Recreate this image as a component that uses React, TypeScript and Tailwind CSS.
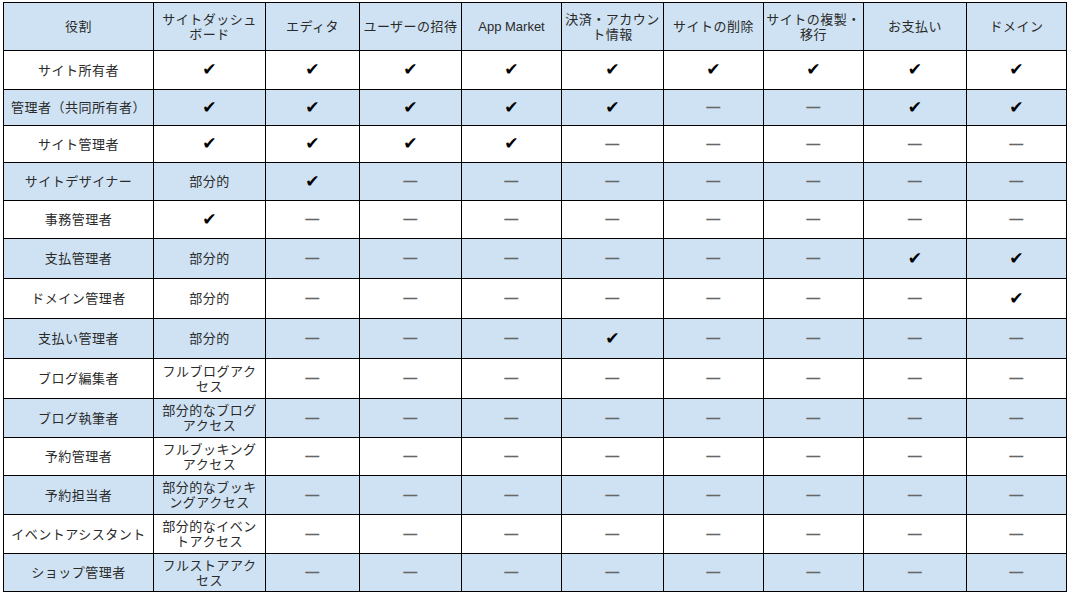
const headers: string[][] = [
  ['役割'],
  ['サイトダッシュ', 'ボード'],
  ['エディタ'],
  ['ユーザーの招待'],
  ['App Market'],
  ['決済・アカウン', 'ト情報'],
  ['サイトの削除'],
  ['サイトの複製・', '移行'],
  ['お支払い'],
  ['ドメイン'],
];

const widths = [
  'w-[150px]',
  'w-[112px]',
  'w-[94px]',
  'w-[102px]',
  'w-[100px]',
  'w-[102px]',
  'w-[100px]',
  'w-[100px]',
  'w-[103px]',
  'w-[100px]',
];

const Y = '✔';
const N = '—';

interface Row {
  role: string;
  dash: string[];
  cells: string[];
  h: string;
}

const rows: Row[] = [
  { role: 'サイト所有者', dash: [Y], cells: [Y, Y, Y, Y, Y, Y, Y, Y], h: 'h-[39px]' },
  { role: '管理者（共同所有者）', dash: [Y], cells: [Y, Y, Y, Y, N, N, Y, Y], h: 'h-[36px]' },
  { role: 'サイト管理者', dash: [Y], cells: [Y, Y, Y, N, N, N, N, N], h: 'h-[37px]' },
  { role: 'サイトデザイナー', dash: ['部分的'], cells: [Y, N, N, N, N, N, N, N], h: 'h-[38px]' },
  { role: '事務管理者', dash: [Y], cells: [N, N, N, N, N, N, N, N], h: 'h-[38px]' },
  { role: '支払管理者', dash: ['部分的'], cells: [N, N, N, N, N, N, Y, Y], h: 'h-[40px]' },
  { role: 'ドメイン管理者', dash: ['部分的'], cells: [N, N, N, N, N, N, N, Y], h: 'h-[40px]' },
  { role: '支払い管理者', dash: ['部分的'], cells: [N, N, N, Y, N, N, N, N], h: 'h-[40px]' },
  { role: 'ブログ編集者', dash: ['フルブログアク', 'セス'], cells: [N, N, N, N, N, N, N, N], h: 'h-[40px]' },
  { role: 'ブログ執筆者', dash: ['部分的なブログ', 'アクセス'], cells: [N, N, N, N, N, N, N, N], h: 'h-[39px]' },
  { role: '予約管理者', dash: ['フルブッキング', 'アクセス'], cells: [N, N, N, N, N, N, N, N], h: 'h-[38px]' },
  { role: '予約担当者', dash: ['部分的なブッキ', 'ングアクセス'], cells: [N, N, N, N, N, N, N, N], h: 'h-[39px]' },
  { role: 'イベントアシスタント', dash: ['部分的なイベン', 'トアクセス'], cells: [N, N, N, N, N, N, N, N], h: 'h-[39px]' },
  { role: 'ショップ管理者', dash: ['フルストアアク', 'セス'], cells: [N, N, N, N, N, N, N, N], h: 'h-[38px]' },
];

function Mark({ value }: { value: string }) {
  if (value === Y) {
    return <span className="text-[17px] leading-[15px] text-black font-['DejaVu_Sans',sans-serif]">{Y}</span>;
  }
  if (value === N) {
    return <span className="text-[14px] font-bold text-[#666] font-['Liberation_Sans',sans-serif]">{N}</span>;
  }
  return <span>{value}</span>;
}

function Lines({ lines }: { lines: string[] }) {
  return (
    <>
      {lines.map((l, i) => (
        <div key={i} className={/^[A-Za-z ]+$/.test(l) ? 'tracking-normal' : ''}>
          {l === Y || l === N ? <Mark value={l} /> : l}
        </div>
      ))}
    </>
  );
}

export default function App() {
  return (
    <div className="w-[1069px] h-[595px] bg-white pl-[3px] pt-[2px] font-['Liberation_Sans','Noto_Sans_CJK_JP',sans-serif] text-[13px] leading-[15px] tracking-[0.5px] text-[#2a2a2a]">
      <table className="border-collapse table-fixed">
        <thead>
          <tr className="h-[48px] bg-[#cfe2f3]">
            {headers.map((h, i) => (
              <th key={i} className={`${widths[i]} border border-black font-normal text-center align-middle px-[2px]`}>
                <Lines lines={h} />
              </th>
            ))}
          </tr>
        </thead>
        <tbody>
          {rows.map((r, ri) => (
            <tr key={ri} className={`${r.h} ${ri % 2 === 1 ? 'bg-[#cfe2f3]' : 'bg-white'}`}>
              <td className="border border-black text-center align-middle px-[2px]">{r.role}</td>
              <td className="border border-black text-center align-middle px-[2px]">
                <Lines lines={r.dash} />
              </td>
              {r.cells.map((c, ci) => (
                <td key={ci} className="border border-black text-center align-middle px-[2px]">
                  <Mark value={c} />
                </td>
              ))}
            </tr>
          ))}
        </tbody>
      </table>
    </div>
  );
}
